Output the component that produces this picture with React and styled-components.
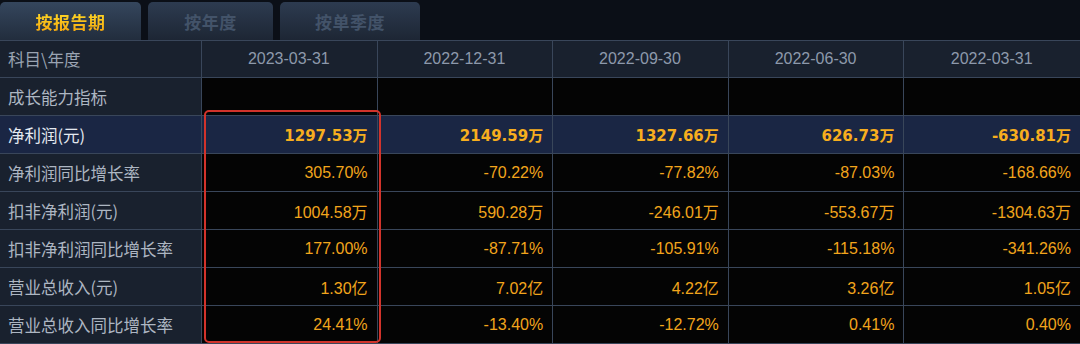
import React from 'react'
import styled, { createGlobalStyle, css } from 'styled-components'

const GlobalStyle = createGlobalStyle`
    html, body {
        margin: 0;
        padding: 0;
        background: #0b0f17;
    }
    * {
        box-sizing: border-box;
    }
`

const Page = styled.div`
    width: 1080px;
    height: 344px;
    overflow: hidden;
    background: #0b0f17;
    font-family: "Noto Sans CJK SC", "Liberation Sans", sans-serif;
`

const TabBar = styled.div`
    display: flex;
    gap: 7px;
    height: 40px;
    padding-top: 2px;
`

const Tab = styled.div`
    width: ${({ $width }) => $width}px;
    border-radius: 5px 5px 0 0;
    display: flex;
    align-items: center;
    justify-content: center;
    font-size: 17px;
    font-weight: 700;
    letter-spacing: 0.5px;
    background: linear-gradient(#2d3b50, #1d2634);
    color: #435369;

    ${({ $active }) => $active && css`
        background: linear-gradient(#35465d, #222d3d);
        span {
            background: linear-gradient(#ffe02a, #f4a20c);
            -webkit-background-clip: text;
            background-clip: text;
            color: transparent;
        }
    `}
`

const Table = styled.div`
    position: relative;
    border-top: 1px solid #39465a;
`

const Row = styled.div`
    display: grid;
    grid-template-columns: 202px repeat(5, 1fr);
    height: ${({ $header }) => ($header ? 37 : 38)}px;
    background: ${({ $highlight }) => ($highlight ? '#1a2644' : '#040404')};
`

const Cell = styled.div`
    display: flex;
    align-items: center;
    justify-content: flex-end;
    padding: 0 9px 0 8px;
    border-right: 1px solid #39465a;
    border-bottom: 1px solid #39465a;
    color: #f2a51c;
    font-family: "Liberation Sans", "Noto Sans CJK SC", sans-serif;
    font-size: 16px;

    &:last-child {
        border-right: none;
    }

    ${({ $bold }) => $bold && css`
        font-family: "DejaVu Sans", "Noto Sans CJK SC", sans-serif;
        font-weight: 700;
        font-size: 15px;
        color: #f7ae1e;
    `}
`

const LabelCell = styled(Cell)`
    justify-content: flex-start;
    background: ${({ $highlight }) => ($highlight ? '#1a2644' : '#19212e')};
    color: ${({ $highlight }) => ($highlight ? '#e4e9f0' : '#adb6c2')};
    font-family: "Noto Sans CJK SC", sans-serif;
    font-size: 16.5px;
`

const HeadCell = styled(Cell)`
    justify-content: center;
    background: #19212e;
    color: #8d99ab;
    font-size: 16px;
`

const HeadLabel = styled(HeadCell)`
    justify-content: flex-start;
    font-family: "Noto Sans CJK SC", sans-serif;
    font-size: 16.5px;
    color: #9aa4b2;
`

const Callout = styled.div`
    position: absolute;
    left: 204px;
    top: 69px;
    width: 177px;
    height: 233px;
    border: 2px solid #d2332b;
    border-radius: 5px;
    pointer-events: none;
`

const dates = ['2023-03-31', '2022-12-31', '2022-09-30', '2022-06-30', '2022-03-31']

const rows = [
    { label: '成长能力指标', values: ['', '', '', '', ''] },
    { label: '净利润(元)', values: ['1297.53万', '2149.59万', '1327.66万', '626.73万', '-630.81万'], highlight: true },
    { label: '净利润同比增长率', values: ['305.70%', '-70.22%', '-77.82%', '-87.03%', '-168.66%'] },
    { label: '扣非净利润(元)', values: ['1004.58万', '590.28万', '-246.01万', '-553.67万', '-1304.63万'] },
    { label: '扣非净利润同比增长率', values: ['177.00%', '-87.71%', '-105.91%', '-115.18%', '-341.26%'] },
    { label: '营业总收入(元)', values: ['1.30亿', '7.02亿', '4.22亿', '3.26亿', '1.05亿'] },
    { label: '营业总收入同比增长率', values: ['24.41%', '-13.40%', '-12.72%', '0.41%', '0.40%'] },
]

export default function App() {
    return (
        <Page>
            <GlobalStyle />
            <TabBar>
                <Tab $active $width={141}><span>按报告期</span></Tab>
                <Tab $width={125}><span>按年度</span></Tab>
                <Tab $width={140}><span>按单季度</span></Tab>
            </TabBar>
            <Table>
                <Row $header>
                    <HeadLabel>科目\年度</HeadLabel>
                    {dates.map(d => <HeadCell key={d}>{d}</HeadCell>)}
                </Row>
                {rows.map(row => (
                    <Row key={row.label} $highlight={row.highlight}>
                        <LabelCell $highlight={row.highlight}>{row.label}</LabelCell>
                        {row.values.map((v, i) => (
                            <Cell key={i} $bold={row.highlight}>{v}</Cell>
                        ))}
                    </Row>
                ))}
                <Callout />
            </Table>
        </Page>
    )
}
